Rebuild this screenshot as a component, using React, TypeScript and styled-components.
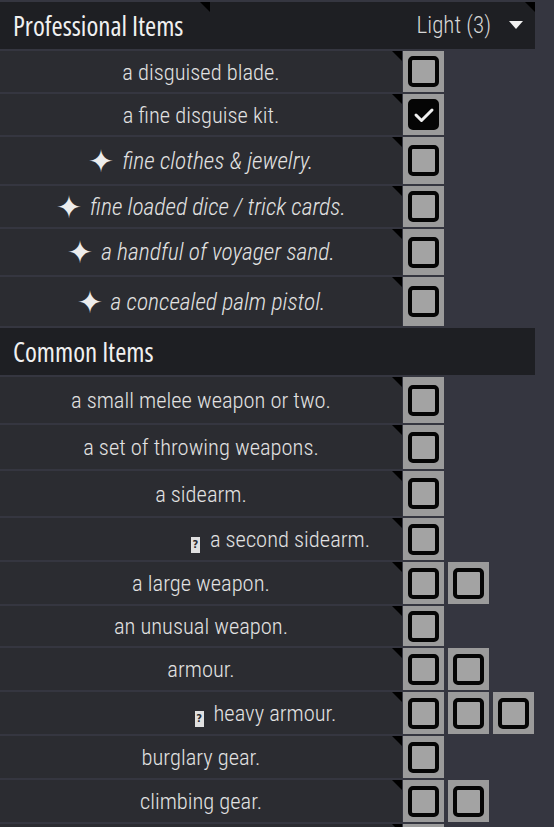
import React from 'react';
import styled, { createGlobalStyle } from 'styled-components';

const GlobalStyle = createGlobalStyle`
  html, body {
    margin: 0;
    padding: 0;
    background: #353640;
  }
  body {
    font-family: Roboto, "Liberation Sans", sans-serif;
    font-stretch: condensed;
    color: #e4e4e4;
  }
`;

type Item = {
  label: string;
  boxes: boolean[];
  height: number;
  star?: boolean;
  tofu?: boolean;
  shift?: number;
};

const professional: Item[] = [
  { label: 'a disguised blade.', boxes: [false], height: 41 },
  { label: 'a fine disguise kit.', boxes: [true], height: 41 },
  { label: 'fine clothes & jewelry.', boxes: [false], height: 47, star: true },
  { label: 'fine loaded dice / trick cards.', boxes: [false], height: 41, star: true },
  { label: 'a handful of voyager sand.', boxes: [false], height: 46, star: true },
  { label: 'a concealed palm pistol.', boxes: [false], height: 49, star: true },
];

const common: Item[] = [
  { label: 'a small melee weapon or two.', boxes: [false], height: 46 },
  { label: 'a set of throwing weapons.', boxes: [false], height: 44 },
  { label: 'a sidearm.', boxes: [false], height: 45 },
  { label: 'a second sidearm.', boxes: [false], height: 42, tofu: true, shift: 159 },
  { label: 'a large weapon.', boxes: [false, false], height: 42 },
  { label: 'an unusual weapon.', boxes: [false], height: 40 },
  { label: 'armour.', boxes: [false, false], height: 42 },
  { label: 'heavy armour.', boxes: [false, false, false], height: 42, tofu: true, shift: 129 },
  { label: 'burglary gear.', boxes: [false], height: 42 },
  { label: 'climbing gear.', boxes: [false, false], height: 42 },
  { label: '', boxes: [false], height: 42 },
];

const Sheet = styled.div`
  width: 554px;
  height: 827px;
  overflow: hidden;
  padding-top: 2px;
  box-sizing: border-box;
  display: flex;
  flex-direction: column;
  gap: 2px;
  background: #353640;
`;

const SectionHeader = styled.div<{ $height: number }>`
  width: 535px;
  height: ${(p) => p.$height}px;
  background: #1e1f23;
  display: flex;
  align-items: center;
  position: relative;
  flex-shrink: 0;
`;

const Corner = styled.span`
  position: absolute;
  top: 0;
  right: 0;
  width: 0;
  height: 0;
  border-top: 10px solid #000;
  border-left: 10px solid transparent;
`;

const SectionTitle = styled.div`
  width: 210px;
  height: 100%;
  box-sizing: border-box;
  padding-left: 13px;
  display: flex;
  align-items: center;
  position: relative;
  font-family: "Open Sans", Roboto, sans-serif;
  font-stretch: 75%;
  font-weight: 400;
  font-size: 27px;
  color: #f0f0f0;
`;

const Load = styled.div`
  flex: 1;
  display: flex;
  align-items: center;
  justify-content: flex-end;
  gap: 18px;
  padding-right: 12px;
  font-size: 23px;
  font-weight: 300;
  color: #d6d6d6;
`;

const Caret = styled.span`
  width: 0;
  height: 0;
  border-left: 7px solid transparent;
  border-right: 7px solid transparent;
  border-top: 8px solid #f2f2f2;
  margin-top: -2px;
`;

const Row = styled.div<{ $height: number }>`
  display: flex;
  gap: 1px;
  height: ${(p) => p.$height}px;
  flex-shrink: 0;
`;

const Label = styled.div<{ $shift: number; $italic: boolean }>`
  width: 402px;
  box-sizing: border-box;
  padding-left: ${(p) => p.$shift}px;
  background: #2b2c31;
  position: relative;
  display: flex;
  align-items: center;
  justify-content: center;
  font-size: ${(p) => (p.$italic ? '23.5px' : '22.5px')};
  font-weight: 300;
  font-style: ${(p) => (p.$italic ? 'italic' : 'normal')};
  color: #e2e2e2;
  white-space: nowrap;
`;

const Star = styled.span`
  font-family: "DejaVu Sans", sans-serif;
  font-stretch: normal;
  font-style: normal;
  font-size: 31px;
  line-height: 20px;
  color: #ededed;
  margin-right: 8px;
  vertical-align: -3px;
`;

const Tofu = styled.span`
  display: inline-block;
  width: 9px;
  height: 16px;
  background: #e0e0e0;
  color: #2b2c31;
  font-family: "DejaVu Sans", sans-serif;
  font-stretch: normal;
  font-style: normal;
  font-size: 10px;
  font-weight: bold;
  line-height: 16px;
  text-align: center;
  margin-right: 10px;
  vertical-align: -1px;
`;

const Boxes = styled.div`
  display: flex;
  gap: 4px;
`;

const BoxCell = styled.div`
  width: 41px;
  background: #9b9b9b;
  display: flex;
  align-items: center;
  justify-content: center;
`;

const Box = styled.div<{ $checked: boolean }>`
  width: 31px;
  height: 31px;
  box-sizing: border-box;
  border: 4px solid #050505;
  border-radius: 5px;
  background: ${(p) => (p.$checked ? '#050505' : '#a3a3a3')};
  display: flex;
  align-items: center;
  justify-content: center;
`;

const Check = () => (
  <svg width="22" height="18" viewBox="0 0 22 18">
    <polyline points="3,9 8.5,14.5 19,4" fill="none" stroke="#f0f0f0" strokeWidth="3" strokeLinecap="round" strokeLinejoin="round" />
  </svg>
);

const ItemRow = ({ item }: { item: Item }) => (
  <Row $height={item.height}>
    <Label $shift={item.shift ?? 0} $italic={!!item.star}>
      <span>
        {item.star && <Star>✦</Star>}
        {item.tofu && <Tofu>?</Tofu>}
        {item.label}
      </span>
      <Corner />
    </Label>
    <Boxes>
      {item.boxes.map((checked, i) => (
        <BoxCell key={i}>
          <Box $checked={checked}>{checked && <Check />}</Box>
        </BoxCell>
      ))}
    </Boxes>
  </Row>
);

const App = () => {
  return (
    <>
      <GlobalStyle />
      <Sheet>
        <SectionHeader $height={47}>
          <SectionTitle>
            Professional Items
            <Corner />
          </SectionTitle>
          <Load>
            Light (3)
            <Caret />
          </Load>
          <Corner />
        </SectionHeader>
        {professional.map((item) => (
          <ItemRow key={item.label} item={item} />
        ))}
        <SectionHeader $height={47}>
          <SectionTitle>Common Items</SectionTitle>
        </SectionHeader>
        {common.map((item, i) => (
          <ItemRow key={i} item={item} />
        ))}
      </Sheet>
    </>
  );
};

export default App;
